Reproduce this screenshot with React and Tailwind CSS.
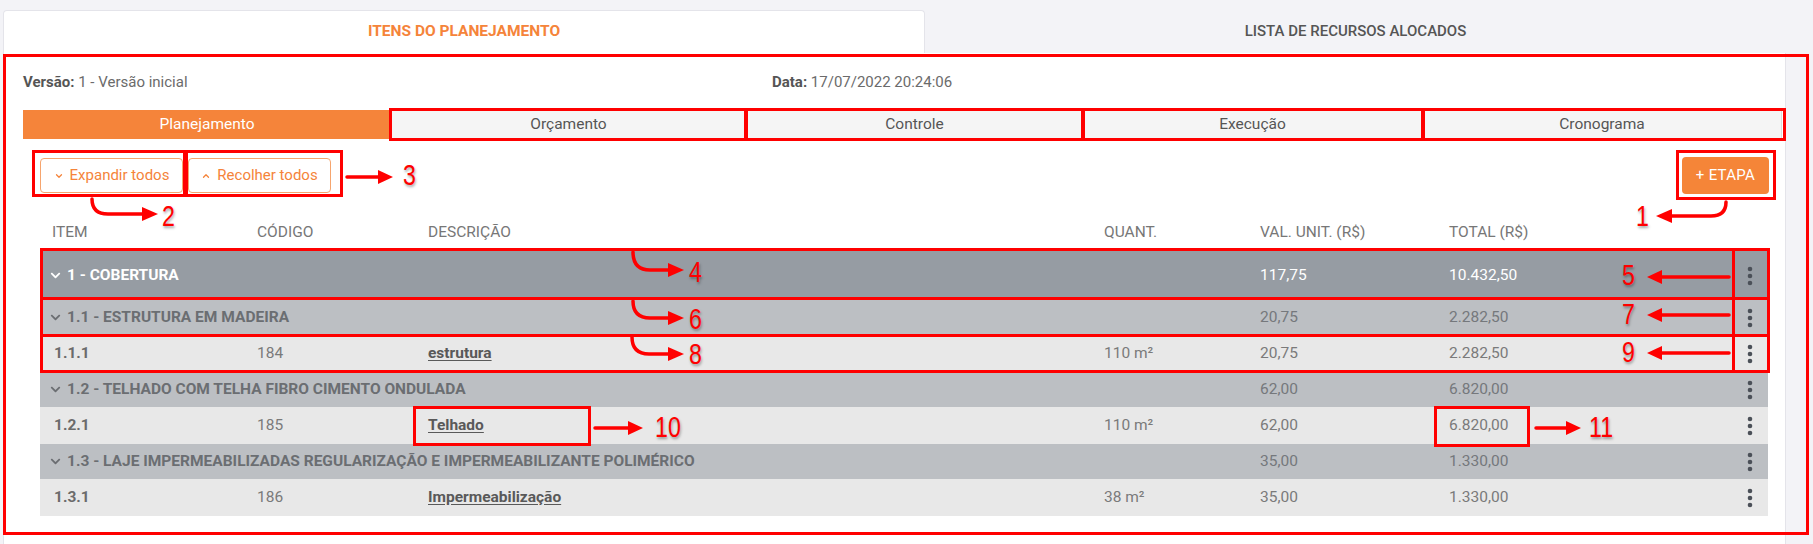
import React from 'react';
import { FaChevronDown } from 'react-icons/fa';
import { ChevronDown, ChevronUp } from 'lucide-react';

const rows = [
    { type: 'g1', label: '1 - COBERTURA', val: '117,75', total: '10.432,50' },
    { type: 'g2', label: '1.1 - ESTRUTURA EM MADEIRA', val: '20,75', total: '2.282,50' },
    { type: 'item', item: '1.1.1', code: '184', desc: 'estrutura', qty: '110 m²', val: '20,75', total: '2.282,50' },
    { type: 'g2', label: '1.2 - TELHADO COM TELHA FIBRO CIMENTO ONDULADA', val: '62,00', total: '6.820,00' },
    { type: 'item', item: '1.2.1', code: '185', desc: 'Telhado', qty: '110 m²', val: '62,00', total: '6.820,00' },
    { type: 'g2', label: '1.3 - LAJE IMPERMEABILIZADAS REGULARIZAÇÃO E IMPERMEABILIZANTE POLIMÉRICO', val: '35,00', total: '1.330,00' },
    { type: 'item', item: '1.3.1', code: '186', desc: 'Impermeabilização', qty: '38 m²', val: '35,00', total: '1.330,00' },
];

const subTabs = [
    { label: 'Planejamento', w: 'w-[368px]', active: true },
    { label: 'Orçamento', w: 'w-[355px]' },
    { label: 'Controle', w: 'w-[337px]' },
    { label: 'Execução', w: 'w-[339px]' },
    { label: 'Cronograma', w: 'w-[360px]' },
];

const grid = 'grid grid-cols-[217px_171px_676px_156px_189px_283px_36px] items-center';

const Dots = () => (
    <svg width="6" height="20" viewBox="0 0 6 20" className="mx-auto">
        <circle cx="3" cy="3" r="2.3" fill="#4b5058" />
        <circle cx="3" cy="10" r="2.3" fill="#4b5058" />
        <circle cx="3" cy="17" r="2.3" fill="#4b5058" />
    </svg>
);

const Row = ({ r }) => {
    if (r.type === 'item') {
        return (
            <div className={`${grid} h-[37px] bg-[#e8e8e8] text-[#7a7a7a]`}>
                <span className="pl-[14px] font-bold text-[#6b6b6b]">{r.item}</span>
                <span>{r.code}</span>
                <span className="font-bold text-[#595959] underline underline-offset-2">{r.desc}</span>
                <span>{r.qty}</span>
                <span>{r.val}</span>
                <span>{r.total}</span>
                <Dots />
            </div>
        );
    }
    const top = r.type === 'g1';
    return (
        <div className={`${grid} ${top ? 'h-[49px] bg-[#969ca3] text-white' : 'h-[35px] bg-[#bcbfc3] text-[#75787c]'}`}>
            <span className={`col-span-4 flex items-center gap-[6px] pl-[10px] font-bold ${top ? 'text-white' : 'text-[#6b6e72]'}`}>
                <FaChevronDown className="w-[11px] h-[11px]" />
                {r.label}
            </span>
            <span>{r.val}</span>
            <span>{r.total}</span>
            <Dots />
        </div>
    );
};

const boxes = [
    [3, 54, 1806, 481],
    [389, 108, 358, 33],
    [745, 108, 339, 33],
    [1082, 108, 342, 33],
    [1422, 108, 364, 33],
    [32, 150, 154, 47],
    [185, 150, 158, 47],
    [1676, 150, 100, 50],
    [40, 248, 1695, 52],
    [1732, 248, 38, 52],
    [40, 297, 1695, 40],
    [1732, 297, 38, 40],
    [40, 334, 1695, 39],
    [1732, 334, 38, 39],
    [413, 406, 178, 40],
    [1434, 406, 96, 41],
];

const labels = [
    ['3', 403, 160],
    ['2', 162, 201],
    ['1', 1636, 201],
    ['4', 689, 257],
    ['6', 689, 304],
    ['8', 689, 339],
    ['5', 1622, 260],
    ['7', 1622, 299],
    ['9', 1622, 337],
    ['10', 655, 412],
    ['11', 1589, 412],
];

const Annotations = () => (
    <div className="absolute inset-0 pointer-events-none">
        {boxes.map(([x, y, w, h], i) => (
            <div key={i} className="absolute border-[3px] border-[#ff0000]" style={{ left: x, top: y, width: w, height: h }} />
        ))}
        <svg className="absolute inset-0" width="1813" height="544" viewBox="0 0 1813 544">
            <g stroke="#ff0000" strokeWidth="3.5" fill="none" strokeLinecap="round">
                <path d="M347 177 L380 177" />
                <path d="M92 199 Q92 214 108 214 L144 214" />
                <path d="M1726 202 Q1726 216 1711 216 L1670 216" />
                <path d="M633 252 Q633 270 650 270 L670 270" />
                <path d="M633 301 Q633 318 650 318 L670 318" />
                <path d="M632 337 Q632 354 649 354 L670 354" />
                <path d="M1729 277 L1660 277" />
                <path d="M1729 315 L1660 315" />
                <path d="M1729 353 L1660 353" />
                <path d="M595 428 L630 428" />
                <path d="M1536 428 L1568 428" />
            </g>
            <g fill="#ff0000">
                <polygon points="378,170 393,177 378,184" />
                <polygon points="142,207 158,214 142,221" />
                <polygon points="1672,209 1656,216 1672,223" />
                <polygon points="668,263 684,270 668,277" />
                <polygon points="668,311 684,318 668,325" />
                <polygon points="668,347 684,354 668,361" />
                <polygon points="1662,270 1647,277 1662,284" />
                <polygon points="1662,308 1647,315 1662,322" />
                <polygon points="1662,346 1647,353 1662,360" />
                <polygon points="628,421 643,428 628,435" />
                <polygon points="1566,421 1581,428 1566,435" />
            </g>
        </svg>
        {labels.map(([t, x, y]) => (
            <span
                key={t}
                className="absolute origin-top-left scale-x-[0.8] text-[29px] leading-[30px] text-[#ff0000] font-['Liberation_Sans',sans-serif] [text-shadow:1px_2px_3px_rgba(0,0,0,0.35)]"
                style={{ left: x, top: y }}
            >
                {t}
            </span>
        ))}
    </div>
);

export default function App() {
    return (
        <div className="relative w-[1813px] h-[544px] overflow-hidden bg-[#f3f3f7] font-[Roboto,sans-serif] text-[15px]">
            <div className="flex pt-[10px] pl-[3px] pr-[27px]">
                <div className="w-[922px] h-[43px] flex items-center justify-center bg-white border border-b-0 border-[#e4e4ea] rounded-t-[4px] text-[15.5px] font-bold text-[#f5843a]">
                    ITENS DO PLANEJAMENTO
                </div>
                <div className="flex-1 h-[43px] flex items-center justify-center text-[15px] font-medium text-[#555]">
                    LISTA DE RECURSOS ALOCADOS
                </div>
            </div>

            <div className="ml-[3px] w-[1783px] h-[491px] bg-white border-x border-[#e4e4ea]">
                <div className="flex pl-[19px] pt-[20px] h-[38px] items-center text-[#6b6b6b]">
                    <span className="w-[749px]"><b className="text-[#555]">Versão:</b> 1 - Versão inicial</span>
                    <span><b className="text-[#555]">Data:</b> 17/07/2022 20:24:06</span>
                </div>

                <div className="flex ml-[19px] mt-[19px] text-[15.5px]">
                    {subTabs.map((t) => (
                        <div
                            key={t.label}
                            className={`${t.w} h-[29px] flex items-center justify-center border ${t.active ? 'bg-[#f5843a] border-[#f5843a] text-white' : 'bg-[#f5f5f5] border-[#dcdcdc] text-[#555]'}`}
                        >
                            {t.label}
                        </div>
                    ))}
                </div>

                <div className="flex items-center mt-[18px] pl-[36px] pr-[16px]">
                    <button className="w-[143px] h-[35px] flex items-center justify-center gap-[6px] border border-[#f6a56e] rounded-[4px] text-[#f5843a]">
                        <ChevronDown className="w-[10px] h-[10px]" strokeWidth={3} /> Expandir todos
                    </button>
                    <button className="ml-[5px] w-[143px] h-[35px] flex items-center justify-center gap-[6px] border border-[#f6a56e] rounded-[4px] text-[#f5843a]">
                        <ChevronUp className="w-[10px] h-[10px]" strokeWidth={3} /> Recolher todos
                    </button>
                    <button className="ml-auto w-[87px] h-[37px] bg-[#f58538] rounded-[4px] text-white text-[15px] tracking-[0.3px]">
                        + ETAPA
                    </button>
                </div>

                <div className="ml-[36px] w-[1728px]">
                    <div className={`${grid} mt-[27px] h-[18px] text-[#777] text-[15.5px]`}>
                        <span className="pl-[12px]">ITEM</span>
                        <span>CÓDIGO</span>
                        <span>DESCRIÇÃO</span>
                        <span>QUANT.</span>
                        <span>VAL. UNIT. (R$)</span>
                        <span>TOTAL (R$)</span>
                        <span />
                    </div>
                    <div className="mt-[12px] text-[15.5px]">
                        {rows.map((r, i) => (
                            <Row key={i} r={r} />
                        ))}
                    </div>
                </div>
            </div>

            <Annotations />
        </div>
    );
}
